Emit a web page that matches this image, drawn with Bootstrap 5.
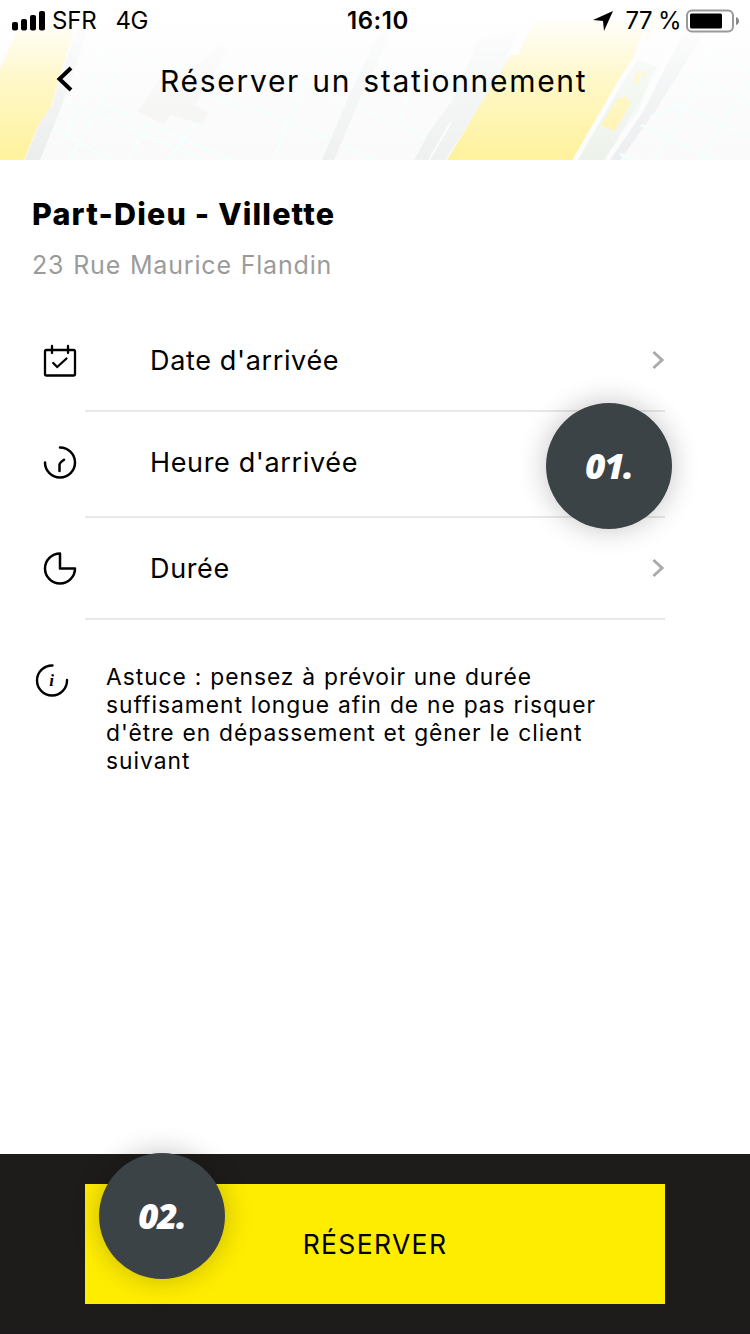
<!DOCTYPE html>
<html lang="fr">
<head>
<meta charset="utf-8">
<meta name="viewport" content="width=device-width, initial-scale=1">
<title>Réserver un stationnement</title>
<link href="https://cdn.jsdelivr.net/npm/bootstrap@5.3.0/dist/css/bootstrap.min.css" rel="stylesheet">
<style>
body{font-family:Inter,sans-serif;color:#000;background:#fff;font-size:26px;line-height:32px}
svg{display:block;flex:none}
.screen{width:750px;height:1334px}
.top-area{height:160px}
.map-art{position:absolute;inset:0}
.status-row{height:40px;font-size:24px;line-height:40px;padding:1px 10px 0 12px}
.carrier{letter-spacing:-.2px;margin-left:6px}
.network{letter-spacing:-.5px;margin-left:19px}
.clock{position:absolute;left:0;right:0;text-align:center;font-weight:600;letter-spacing:.6px;padding-left:6px}
.charge{letter-spacing:-.6px;margin:0 5px 0 12px}
.title-row{height:80px;padding-left:55px}
.back-icon{margin-top:-2px}
.page-title{font-size:30px;line-height:40px;font-weight:400;letter-spacing:1.700px;word-spacing:2px;margin:2px 0 0 86px}
.place{padding:36px 32px 0;height:150px}
.place-name{font-size:30.500px;line-height:36px;font-weight:800;letter-spacing:1.150px;margin:0 0 17px}
.place-address{font-size:25px;line-height:32px;letter-spacing:.820px;word-spacing:1px;color:#9b9b9b}
.field{width:580px;margin-left:85px;border-bottom:2px solid #e8e8e8;font-size:27px;letter-spacing:.640px;color:#000}
.field-date,.field-duration{height:102px;padding-top:2px}
.field-time{height:106px;padding-bottom:2px}
.field-icon{margin-left:-42px;margin-right:73px}
.chevron{margin-top:-2px}
.tip{font-size:22.800px;line-height:28px;letter-spacing:.980px;word-spacing:.500px;margin:43px 0 0;padding-left:35px}
.tip p{margin:0 0 0 37px}
.dot{position:absolute;width:126px;height:126px;background:#3c4346;color:#fff;font:italic 800 35px/125px "Open Sans",sans-serif;letter-spacing:-1.200px;text-align:center;box-shadow:0 0 28px rgba(0,0,0,.24);z-index:3}
.dot-one{left:461px;top:-9px}
.dot-two{left:99px;top:-1px}
.footer-bar{height:180px;background:#1d1c1b;padding:30px 85px 28px;border-bottom:2px solid #1b191c}
.book-btn,.book-btn:hover{height:120px;background:#ffed00;color:#000;font-size:26.500px;letter-spacing:1.350px;border:0;border-radius:0;padding-top:8px}
</style>
</head>
<body>
<main class="screen d-flex flex-column overflow-hidden">
<header class="top-area position-relative">
<svg class="map-art" width="750" height="160" viewBox="0 0 750 160" aria-hidden="true">
<defs><linearGradient id="fade" x1="0" y1="0" x2="0" y2="1"><stop offset="0" stop-color="#fff"/><stop offset=".18" stop-color="#fff" stop-opacity=".88"/><stop offset=".5" stop-color="#fff" stop-opacity=".45"/><stop offset="1" stop-color="#fff" stop-opacity="0"/></linearGradient></defs>
<path fill="#fafafa" d="M0 0h750v160H0z"/>
<g fill="none" stroke="#f4fffd" stroke-width="3">
<path d="M82 42l30 18 18-8 120 62M60 98l180 78M54 128l70 40M128 50L70 160M180 62l-52 98M105 48l-40 90M102 104l148 64M205 110l-36 50M250 58l90 42M250 105l140 62M318 50l-45 110M320 48l100 48M360 108l65 30M415 70l-16 52"/>
</g>
<path fill="#f3f3f2" d="M222 42l-22 22-40 15-22 33 25 12 8-9 31 9 6-11-13-8 31-54z"/>
<path fill="#eceeee" d="M76 30h12L62 105l-22 55H25l14-36 12-17z"/>
<path fill="#fff29c" d="M22 20h55L50 108l-12 17-14 35H0V70z"/>
<path fill="#eff1f1" d="M385 20h13l-41 85-23 55h-12l26-62z"/>
<path fill="#eff1f1" d="M478 40l47-10-22 42-58 88h-31l16-29 22-30z"/>
<path stroke="#fafcfc" stroke-width="2" d="M451 122l-22 38"/>
<path fill="#fff29c" d="M534 20h125l-23 36-14 20-49 84H447l53-88z"/>
<path fill="#fcfcfd" d="M530 30l-12 25h-10l-10 17 22-42z"/>
<path fill="#edf3eb" d="M637 60l20 6-16 34-36 60h-29l47-82z"/>
<path fill="none" stroke="#fcfcfd" stroke-width="5" d="M650 20l-15 40-12 17-48 83"/>
<path fill="#fff2a6" d="M601 125l16-26 8-3 6 7-14 24-3 4zM636 72l5 2-2 8-5 1zM643 70l4 1-3 6-3-2z"/>
<path fill="#eceeef" d="M692 20h20l-56 90-36 50h-14z"/>
<path fill="none" stroke="#fcfcfd" stroke-width="5" d="M686 22l-45 88-34 50"/>
<g fill="none" stroke="#f3fffd" stroke-width="3"><path d="M713 42l-24 60-34 58M750 78l-49 82M666 100l90 39M686 75l70 30M700 50l50 22M641 125l80 38M620 154l20 8M650 118l35-15"/></g>
<path fill="url(#fade)" d="M0 0h750v160H0z"/>
</svg>
<div class="status-row position-relative d-flex align-items-center text-nowrap">
<svg width="34" height="20" viewBox="0 0 34 20"><rect y="11" width="6" height="8.500" rx="2"/><rect x="9" y="8" width="6" height="11.500" rx="2"/><rect x="18" y="4" width="6" height="15.500" rx="2"/><rect x="27" width="6" height="19.500" rx="2"/></svg>
<span class="carrier">SFR</span><span class="network">4G</span>
<span class="clock">16:10</span>
<svg class="ms-auto" width="20" height="20" viewBox="0 0 20 20"><path d="M20 0L11 20 10 10 0 9z"/></svg>
<span class="charge">77 %</span>
<svg width="54" height="24" viewBox="0 0 54 24"><rect x="1" y="1.500" width="46" height="21" rx="5" fill="#fff" stroke="#999" stroke-width="2"/><rect x="4" y="4.500" width="32" height="15" rx="1.500"/><path fill="#888" d="M50 8q3 1 3 4t-3 4z"/></svg>
</div>
<div class="title-row position-relative d-flex align-items-center">
<svg class="back-icon" width="19" height="26" viewBox="0 0 19 26"><path fill="none" stroke="#000" stroke-width="4" d="M16 2L4.500 13 16 24"/></svg>
<h1 class="page-title text-nowrap">Réserver un stationnement</h1>
</div>
</header>
<section class="place"><h2 class="place-name">Part-Dieu - Villette</h2><div class="place-address">23 Rue Maurice Flandin</div></section>
<section>
<div class="field field-date d-flex align-items-center">
<svg class="field-icon" width="34" height="34" viewBox="0 0 34 34" fill="none" stroke="#000" stroke-width="2.300" stroke-linecap="round"><rect x="2" y="6" width="30" height="25.500" rx="1.500"/><path d="M9 2v7M25 2v7M10.200 19l4 4 9.300-8.500"/></svg>
<span>Date d'arrivée</span>
<svg class="chevron ms-auto" width="14" height="20" viewBox="0 0 14 20"><path fill="none" stroke="#aaa" stroke-width="3" d="M2.500 2l8.500 8-8.500 8"/></svg>
</div>
<div class="field field-time position-relative d-flex align-items-center">
<svg class="field-icon" width="34" height="34" viewBox="0 0 34 34" fill="none" stroke="#000" stroke-width="2.500" stroke-linecap="round" stroke-linejoin="round"><path d="M17 1.500a15 15 0 1 1-15 15M16.500 25v-6q0-2.200 4.500-5.200"/></svg>
<span>Heure d'arrivée</span>
<span class="dot dot-one rounded-circle">01.</span>
</div>
<div class="field field-duration d-flex align-items-center">
<svg class="field-icon" width="34" height="34" viewBox="0 0 34 34" fill="none" stroke="#000" stroke-width="2.500" stroke-linejoin="round"><path d="M17 1.500v15h15A15 15 0 1 1 17 1.500z"/></svg>
<span>Durée</span>
<svg class="chevron ms-auto" width="14" height="20" viewBox="0 0 14 20"><path fill="none" stroke="#aaa" stroke-width="3" d="M2.500 2l8.500 8-8.500 8"/></svg>
</div>
</section>
<div class="tip d-flex align-items-start">
<svg width="34" height="34" viewBox="0 0 34 34"><path fill="none" stroke="#000" stroke-width="2.400" stroke-linecap="round" d="M17.500 2.500a15 15 0 1 0 14.500 14.500"/><text x="16.500" y="23" text-anchor="middle" font-family="Liberation Serif, serif" font-style="italic" font-weight="700" font-size="17" letter-spacing="0">i</text></svg>
<p class="text-nowrap">Astuce : pensez à prévoir une durée<br>suffisament longue afin de ne pas risquer<br>d'être en dépassement et gêner le client<br>suivant</p>
</div>
<footer class="footer-bar position-relative mt-auto">
<button class="book-btn btn w-100 d-block" type="button">RÉSERVER</button>
<span class="dot dot-two rounded-circle">02.</span>
</footer>
</main>
<script src="https://cdn.jsdelivr.net/npm/bootstrap@5.3.0/dist/js/bootstrap.bundle.min.js"></script>
</body>
</html>
